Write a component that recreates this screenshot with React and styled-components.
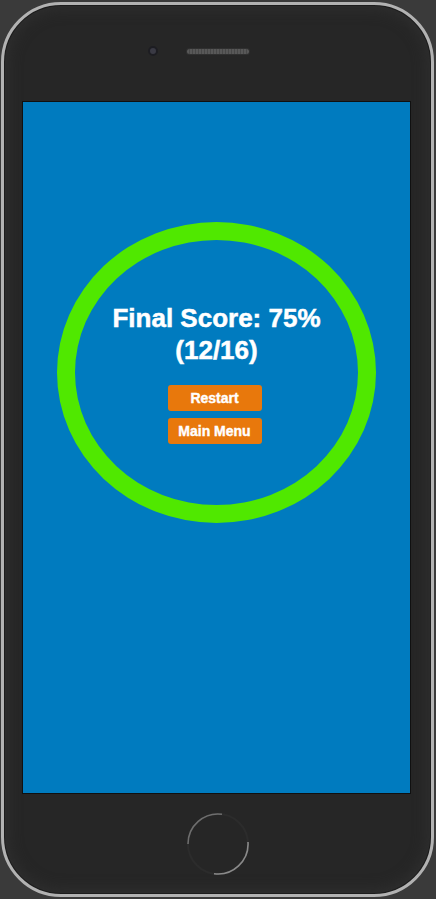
import React from 'react';
import styled, { createGlobalStyle } from 'styled-components';

const GlobalStyle = createGlobalStyle`
    html, body {
        margin: 0;
        padding: 0;
        background: #3a3a3a;
        font-family: "Liberation Sans", Arial, sans-serif;
    }
`;

const Page = styled.div`
    width: 436px;
    height: 899px;
    padding: 2px 2px 2px 1px;
    box-sizing: border-box;
`;

const Phone = styled.div`
    display: flex;
    flex-direction: column;
    width: 433px;
    height: 895px;
    box-sizing: border-box;
    border: 3px solid #b2b2b2;
    border-radius: 60px;
    background: #262626;
    box-shadow: inset 0 0 0 1px #1c1c1c, inset 0 0 14px 4px #2f2f2f;
`;

const TopBar = styled.div`
    display: flex;
    align-items: center;
    gap: 29px;
    height: 10px;
    margin: 41px 0 45px 144px;
`;

const Camera = styled.div`
    width: 10px;
    height: 10px;
    border-radius: 50%;
    box-sizing: border-box;
    border: 2px solid #1d1d22;
    background: #3a3a44;
`;

const Speaker = styled.div`
    width: 62px;
    height: 5px;
    border-radius: 3px;
    background: repeating-linear-gradient(90deg, #585858 0 2px, #484848 2px 3px);
    box-shadow: 0 0 0 1px #303030;
`;

const Screen = styled.div`
    display: flex;
    flex-direction: column;
    align-items: center;
    width: 389px;
    height: 693px;
    margin-left: 18px;
    padding-top: 120px;
    box-sizing: border-box;
    border: 1px solid #101010;
    background: #007bbf;
`;

const Ring = styled.div`
    display: flex;
    flex-direction: column;
    align-items: center;
    justify-content: center;
    width: 319px;
    height: 301px;
    box-sizing: border-box;
    border: 18px solid #50e800;
    border-radius: 50%;
`;

const Score = styled.div`
    color: #fff;
    font-size: 26px;
    font-weight: 700;
    line-height: 32px;
    text-align: center;
    margin-bottom: 19px;
    -webkit-text-stroke: 0.5px #fff;
`;

const Buttons = styled.div`
    display: flex;
    flex-direction: column;
    gap: 7px;
    margin-right: 4px;
`;

const Button = styled.button`
    width: 94px;
    height: 26px;
    padding: 0;
    border: none;
    border-radius: 3px;
    background: #e8780c;
    color: #fff;
    font-family: "Liberation Sans", Arial, sans-serif;
    font-size: 14px;
    font-weight: 700;
    -webkit-text-stroke: 0.4px #fff;
    cursor: pointer;
`;

const HomeButton = styled.svg`
    align-self: center;
    margin-top: 18px;
`;

const App = () => {
    const correct = 12;
    const total = 16;
    const pct = Math.round((correct / total) * 100);

    return (
        <Page>
            <GlobalStyle />
            <Phone>
                <TopBar>
                    <Camera />
                    <Speaker />
                </TopBar>
                <Screen>
                    <Ring>
                        <Score>
                            Final Score: {pct}%
                            <br />({correct}/{total})
                        </Score>
                        <Buttons>
                            <Button>Restart</Button>
                            <Button>Main Menu</Button>
                        </Buttons>
                    </Ring>
                </Screen>
                <HomeButton width="64" height="64" viewBox="0 0 64 64">
                    <circle cx="32" cy="32" r="30" fill="none" stroke="#2c2c2c" strokeWidth="2" />
                    <path d="M2 32 A30 30 0 0 1 36 2.3" fill="none" stroke="#6e6e6e" strokeWidth="1.6" />
                    <path d="M62 30 A30 30 0 0 1 28 61.7" fill="none" stroke="#8a8a8a" strokeWidth="1.6" />
                </HomeButton>
            </Phone>
        </Page>
    );
};

export default App;
